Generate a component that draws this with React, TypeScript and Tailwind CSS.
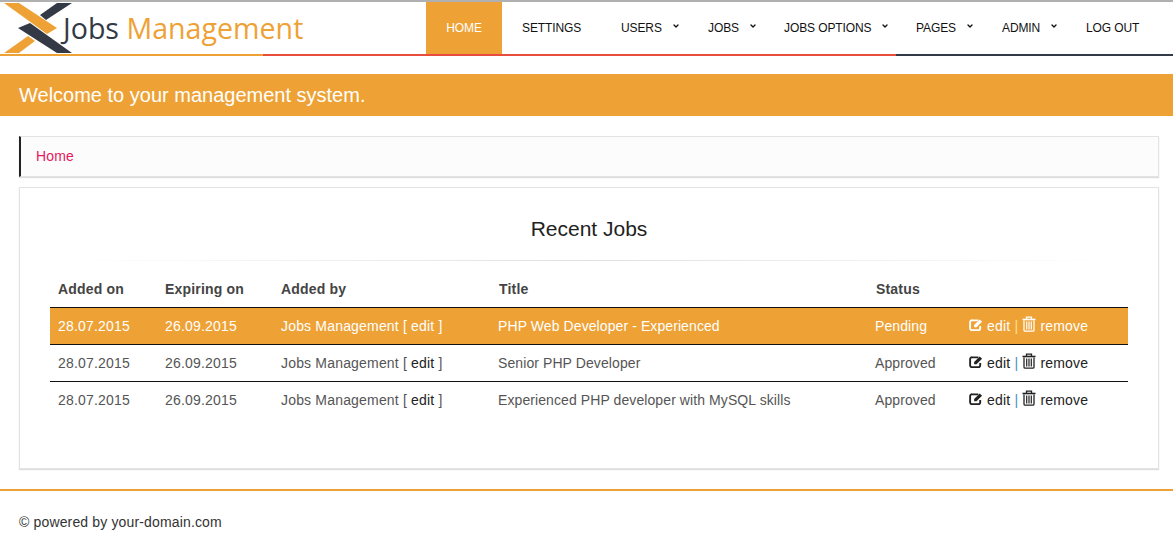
import { ChevronDown } from 'lucide-react';

const navItems = [
  { label: 'Settings', width: 'w-[119px] pl-5' },
  { label: 'Users', width: 'w-[87px] pl-0', caret: true },
  { label: 'Jobs', width: 'w-[76px]', caret: true },
  { label: 'Jobs Options', width: 'w-[132px]', caret: true },
  { label: 'Pages', width: 'w-[86px]', caret: true },
  { label: 'Admin', width: 'w-[84px]', caret: true },
  { label: 'Log Out', width: 'w-[70px]' },
];

const jobs = [
  { title: 'PHP Web Developer - Experienced', status: 'Pending', active: true },
  { title: 'Senior PHP Developer', status: 'Approved' },
  { title: 'Experienced PHP developer with MySQL skills', status: 'Approved' },
];

function Logo() {
  return (
    <svg width="74" height="52" viewBox="0 0 74 52" className="shrink-0">
      <polygon points="4,1 19,1 57,26 47,32" fill="#eea236" />
      <polygon points="4,51 19,51 35,39 28,34" fill="#eea236" />
      <polygon points="40,13 57,1 72,1 46,18" fill="#343a45" />
      <polygon points="18,26 30,21 72,51 57,51" fill="#343a45" />
    </svg>
  );
}

function EditIcon() {
  return (
    <svg width="14" height="14" viewBox="0 0 15 14" className="inline-block align-[-1px]">
      <path d="M10 2H3.5A2 2 0 0 0 1.2 4v6.5a2 2 0 0 0 2.3 2h6.5a2 2 0 0 0 2-2V8" fill="none" stroke="currentColor" strokeWidth="2" />
      <path d="M5.5 9.5V7L11.5 1l2.5 2.500L8 9.500Z" fill="currentColor" />
    </svg>
  );
}

function TrashIcon() {
  return (
    <svg width="14" height="16" viewBox="0 0 14 16" className="inline-block align-[-1px]">
      <path d="M4.500 3V1.200h5V3" fill="none" stroke="currentColor" strokeWidth="1.300" />
      <path d="M0.500 3.500h13" stroke="currentColor" strokeWidth="1.600" />
      <path d="M2 4.500V14a1.200 1.200 0 0 0 1.200 1.200h7.600A1.200 1.200 0 0 0 12 14V4.500" fill="none" stroke="currentColor" strokeWidth="1.300" />
      <path d="M4.700 5.500v8M7 5.500v8M9.300 5.500v8" stroke="currentColor" strokeWidth="1.200" />
    </svg>
  );
}

export default function App() {
  return (
    <div className="min-h-[539px] bg-white font-['Liberation_Sans',Arial,sans-serif] text-sm tracking-[0.18px] text-[#333]">
      {/* Top bar */}
      <header className="border-t-2 border-[#b0b0b0]">
        <div className="flex h-[52px]">
          <div className="flex w-[426px] items-center tracking-normal">
            <Logo />
            <span className="ml-[-11px] font-['Open_Sans',sans-serif] text-[28.600px] leading-none whitespace-nowrap">
              <span className="text-[#343a45]">Jobs</span>{' '}
              <span className="text-[#eea236]">Management</span>
            </span>
          </div>
          <nav className="flex text-xs tracking-[-0.1px] uppercase text-[#111]">
            <a className="flex w-[76px] items-center justify-center bg-[#eea236] text-white">Home</a>
            {navItems.map((item) => (
              <a key={item.label} className={`flex items-center whitespace-nowrap ${item.width}`}>
                {item.label}
                {item.caret && <ChevronDown className="mb-1 ml-[10px] h-2 w-2" strokeWidth={4} />}
              </a>
            ))}
          </nav>
        </div>
        <div className="flex h-[2px]">
          <div className="w-[263px] bg-[#eea236]" />
          <div className="w-[633px] bg-[#e74c3c]" />
          <div className="flex-1 bg-[#343a45]" />
        </div>
      </header>

      {/* Welcome banner */}
      <div className="mt-[18px] flex h-[42px] items-center bg-[#eea236] px-[19px] text-[20px] tracking-normal text-white">
        Welcome to your management system.
      </div>

      <main className="mx-[19px] mt-5 w-[1140px]">
        <div className="flex h-[41px] items-center border border-l-2 border-[#e3e3e3] border-l-[#222] bg-[#fcfcfc] pb-[2px] pl-[15px] text-[#e8175d] shadow-[0_1px_1px_#ddd]">
          Home
        </div>

        <section className="mt-[10px] h-[282px] border border-[#e3e3e3] bg-white px-[30px] pt-[27px] shadow-[0_1px_1px_#ddd]">
          <h2 className="text-center text-[21px] leading-7 tracking-normal text-[#222]">Recent Jobs</h2>
          <div className="mx-auto mt-[17px] h-px w-[1040px] bg-gradient-to-r from-transparent via-[#e0e0e0] to-transparent" />

          <table className="mt-[10px] w-[1078px] table-fixed border-collapse">
            <thead>
              <tr className="h-[36px] border-b border-[#111] text-left font-bold text-[#444]">
                <th className="w-[107px] pl-2">Added on</th>
                <th className="w-[116px] pl-2">Expiring on</th>
                <th className="w-[217px] pl-2">Added by</th>
                <th className="w-[377px] pl-[9px]">Title</th>
                <th className="w-[94px] pl-[9px]">Status</th>
                <th />
              </tr>
            </thead>
            <tbody>
              {jobs.map((job) => (
                <tr
                  key={job.title}
                  className={`h-[37px] border-b border-[#111] last:border-b-0 ${job.active ? 'bg-[#eea236] text-white' : 'text-[#555]'}`}
                >
                  <td className="pl-2">28.07.2015</td>
                  <td className="pl-2">26.09.2015</td>
                  <td className="pl-2">
                    Jobs Management [ <span className={job.active ? 'text-white' : 'text-[#222]'}>edit</span> ]
                  </td>
                  <td className="pl-2 tracking-[0.09px]">{job.title}</td>
                  <td className="pl-2 tracking-[0.1px]">{job.status}</td>
                  <td className={`pl-2 whitespace-nowrap ${job.active ? 'text-white' : 'text-[#222]'}`}>
                    <EditIcon /> edit{' '}
                    <span className={job.active ? 'text-[#ffe08a]' : 'text-[#4a90c8]'}>|</span>{' '}
                    <TrashIcon /> remove
                  </td>
                </tr>
              ))}
            </tbody>
          </table>
        </section>
      </main>

      <footer className="mt-5 h-[50px] border-t-2 border-[#eea236] px-[19px] pt-[21px] leading-5 tracking-[0.15px]">
        © powered by your-domain.com
      </footer>
    </div>
  );
}
